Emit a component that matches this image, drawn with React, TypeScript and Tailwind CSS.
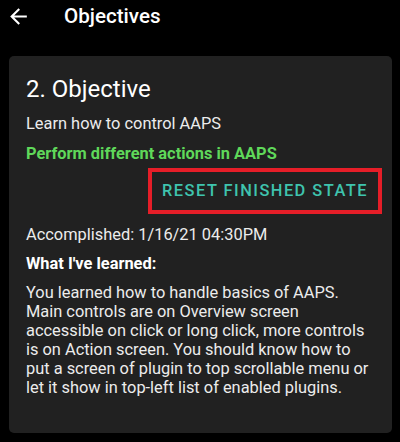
import React from "react";

export default function App() {
  const font = { fontFamily: "Roboto, 'Noto Sans', sans-serif" };
  return (
    <div className="w-[400px] h-[442px] bg-black text-[#ececec] overflow-hidden" style={font}>
      <div className="h-[32px] flex items-center">
        <svg className="ml-[6px] w-[25px] h-[25px]" viewBox="0 0 24 24" fill="#ffffff">
          <path d="M20 11H7.83l5.59-5.59L12 4l-8 8 8 8 1.41-1.41L7.83 13H20v-2z" />
        </svg>
        <div className="ml-[33px] text-[20.6px] leading-[28px] font-medium text-white">Objectives</div>
      </div>
      <div className="mt-[24px] ml-[9px] mr-[8px] bg-[#212121] rounded-[5px] pt-[17px] pb-[36px] pl-[17px] pr-[10px]">
        <div className="text-[24px] leading-[32px] text-white">2. Objective</div>
        <div className="mt-[7px] text-[16.4px] leading-[24px]">Learn how to control AAPS</div>
        <div className="mt-[6px] text-[16.4px] leading-[24px] font-bold text-[#5fd85a]">Perform different actions in AAPS</div>
        <div className="flex justify-end">
          <div className="mt-[2px] h-[46px] border-[4px] border-[#e61e28] flex items-center px-[10px]">
            <span className="text-[16.4px] leading-[24px] font-medium tracking-[0.09em] text-[#3fc4ae]">RESET FINISHED STATE</span>
          </div>
        </div>
        <div className="mt-[9px] text-[16.4px] leading-[24px]">Accomplished: 1/16/21 04:30PM</div>
        <div className="mt-[5px] text-[16.4px] leading-[24px] font-bold text-white">What I've learned:</div>
        <div className="mt-[7px] text-[16.4px] leading-[19px]">
          You learned how to handle basics of AAPS.<br />
          Main controls are on Overview screen<br />
          accessible on click or long click, more controls<br />
          is on Action screen. You should know how to<br />
          put a screen of plugin to top scrollable menu or<br />
          let it show in top-left list of enabled plugins.
        </div>
      </div>
    </div>
  );
}
